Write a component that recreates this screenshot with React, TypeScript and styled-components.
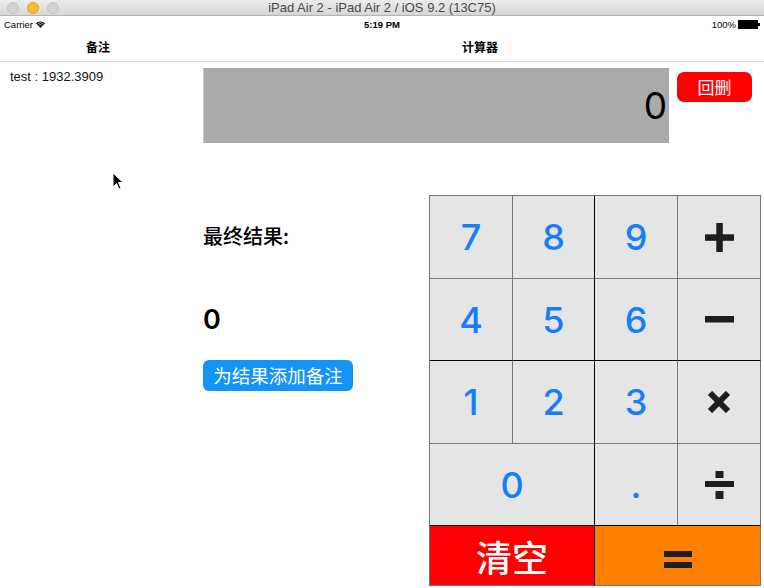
import React from "react";
import styled, { createGlobalStyle } from "styled-components";

const GlobalStyle = createGlobalStyle`
  html, body { margin: 0; padding: 0; background: #fff; }
  body { font-family: "Liberation Sans", "Noto Sans CJK SC", sans-serif; }
  * { box-sizing: border-box; }
`;

const CJK = `"Noto Sans CJK SC", "Liberation Sans", sans-serif`;
const DIGITS = `Inter, "Liberation Sans", sans-serif`;

const Page = styled.div`
  position: relative;
  width: 764px;
  height: 588px;
  overflow: hidden;
  display: flex;
  flex-direction: column;
  background: #fff;
`;

const TitleBar = styled.div`
  height: 16px;
  flex: none;
  display: grid;
  grid-template-columns: 1fr auto 1fr;
  align-items: center;
  background: linear-gradient(#ececec, #d6d6d6);
  border-bottom: 1px solid #b4b4b4;
`;

const Lights = styled.div`
  display: flex;
  gap: 8px;
  padding-left: 7px;
  align-items: center;
  height: 15px;
`;

const Light = styled.span<{ $active?: boolean }>`
  width: 12px;
  height: 12px;
  border-radius: 50%;
  background: ${(p) => (p.$active ? "#fdbb2f" : "#d2d2d2")};
  border: 1px solid ${(p) => (p.$active ? "#e3a224" : "#c2c2c2")};
`;

const WindowTitle = styled.div`
  font-size: 13px;
  line-height: 15px;
  color: #4a4a4a;
  white-space: nowrap;
`;

const StatusBar = styled.div`
  height: 16px;
  flex: none;
  display: grid;
  grid-template-columns: 1fr auto 1fr;
  align-items: center;
  padding: 0 4px;
  font-size: 9.5px;
  color: #000;
`;

const StatusLeft = styled.div`
  display: flex;
  align-items: center;
  gap: 3px;
`;

const StatusTime = styled.div`
  font-weight: 700;
`;

const StatusRight = styled.div`
  display: flex;
  justify-content: flex-end;
  align-items: center;
  gap: 2px;
`;

const NavBar = styled.div`
  height: 30px;
  flex: none;
  display: grid;
  grid-template-columns: 196px 1fr;
  align-items: center;
  border-bottom: 1px solid #d4d4d4;
  font-family: ${CJK};
  font-size: 12px;
  font-weight: 700;
`;

const NavTitle = styled.div`
  text-align: center;
  line-height: 29px;
`;

const Content = styled.div`
  flex: 1;
  display: flex;
`;

const LeftPane = styled.div`
  width: 196px;
  flex: none;
  padding: 7px 0 0 10px;
  font-size: 13px;
  line-height: 15px;
  color: #111;
`;

const RightPane = styled.div`
  flex: 1;
  display: flex;
  flex-direction: column;
  padding: 6px 0 0 7px;
`;

const TopRow = styled.div`
  display: flex;
  align-items: flex-start;
  gap: 8px;
`;

const Display = styled.div`
  width: 466px;
  height: 75px;
  background: #aaaaaa;
  border-left: 1px solid #c9c9c9;
  display: flex;
  align-items: center;
  justify-content: flex-end;
  padding-right: 2px;
  font-family: ${DIGITS};
  font-size: 37px;
  color: #000;
`;

const DeleteButton = styled.button`
  margin-top: 4px;
  width: 75px;
  height: 30px;
  border: none;
  border-radius: 7px;
  background: #ff0000;
  color: #fff;
  font-family: ${CJK};
  font-size: 17px;
  padding: 0;
  line-height: 30px;
`;

const LowerRow = styled.div`
  display: flex;
  margin-top: 52px;
`;

const ResultColumn = styled.div`
  width: 226px;
  flex: none;
  display: flex;
  flex-direction: column;
  align-items: flex-start;
  padding-top: 27px;
`;

const ResultLabel = styled.div`
  font-family: ${CJK};
  font-size: 20px;
  font-weight: 500;
  line-height: 28px;
  color: #000;
`;

const ResultValue = styled.div`
  margin-top: 55px;
  font-family: ${DIGITS};
  font-size: 27px;
  font-weight: 600;
  line-height: 30px;
  color: #000;
`;

const NoteButton = styled.button`
  margin-top: 25px;
  width: 150px;
  height: 31px;
  border: none;
  border-radius: 6px;
  background: #1493f8;
  color: #fff;
  font-family: ${CJK};
  font-size: 18.5px;
  line-height: 31px;
  padding: 0;
  white-space: nowrap;
`;

const Keypad = styled.div`
  display: grid;
  grid-template-columns: 83px 82px 83px 83px;
  grid-template-rows: 83px 82px 83px 82px 60px;
  border-top: 1px solid #777;
  border-left: 1px solid #777;
  box-sizing: content-box;
  width: 331px;
`;

type Variant = "digit" | "op" | "clear" | "equals";

const bgFor = (v: Variant) =>
  v === "clear" ? "#ff0000" : v === "equals" ? "#ff8000" : "#e5e5e5";

const Key = styled.button<{
  $variant: Variant;
  $span?: number;
  $darkRight?: boolean;
  $darkBottom?: boolean;
}>`
  grid-column: span ${(p) => p.$span ?? 1};
  display: flex;
  align-items: center;
  justify-content: center;
  padding: 0;
  border: none;
  border-right: 1px solid ${(p) => (p.$darkRight ? "#000" : "#777")};
  border-bottom: 1px solid ${(p) => (p.$darkBottom ? "#000" : "#777")};
  background: ${(p) => bgFor(p.$variant)};
  color: ${(p) => (p.$variant === "clear" ? "#fff" : p.$variant === "digit" ? "#157efb" : "#1c1c1c")};
  font-family: ${(p) => (p.$variant === "clear" ? CJK : DIGITS)};
  font-weight: 500;
  font-size: 36px;
  line-height: 1;
`;

const Cursor = styled.svg`
  position: absolute;
  left: 112px;
  top: 172px;
`;

const OP_FILL = "#1e1e1e";

const PlusIcon = () => (
  <svg width="29" height="29" viewBox="0 0 29 29" aria-label="+">
    <rect x="11.3" y="0" width="6.5" height="29" fill={OP_FILL} />
    <rect x="0" y="11.3" width="29" height="6.5" fill={OP_FILL} />
  </svg>
);

const MinusIcon = () => (
  <svg width="29" height="7" viewBox="0 0 29 7" aria-label="−">
    <rect x="0" y="0" width="29" height="6.5" fill={OP_FILL} />
  </svg>
);

const TimesIcon = () => (
  <svg width="24" height="22" viewBox="0 0 24 22" aria-label="×">
    <path d="M3 2 L21 20 M21 2 L3 20" stroke={OP_FILL} strokeWidth="6" />
  </svg>
);

const DivideIcon = () => (
  <svg width="29" height="28" viewBox="0 0 29 28" aria-label="÷">
    <rect x="10.5" y="0" width="8" height="7" fill={OP_FILL} />
    <rect x="0" y="10" width="29" height="6" fill={OP_FILL} />
    <rect x="10.5" y="20" width="8" height="8" fill={OP_FILL} />
  </svg>
);

const EqualsIcon = () => (
  <svg width="28" height="17" viewBox="0 0 28 17" aria-label="=" style={{ marginTop: 8 }}>
    <rect x="0" y="0" width="28" height="6" fill={OP_FILL} />
    <rect x="0" y="11" width="28" height="6" fill={OP_FILL} />
  </svg>
);

const WifiIcon = () => (
  <svg width="9" height="7" viewBox="0 0 9 7">
    <path d="M4.5 7 L0 2.2 A6.5 6.5 0 0 1 9 2.2 Z" fill="#000" />
    <path d="M1.6 2.9 A4.3 4.3 0 0 1 7.4 2.9" stroke="#fff" strokeWidth="0.7" fill="none" />
    <path d="M2.8 4.3 A2.5 2.5 0 0 1 6.2 4.3" stroke="#fff" strokeWidth="0.7" fill="none" />
  </svg>
);

const BatteryIcon = () => (
  <svg width="22" height="9" viewBox="0 0 22 9">
    <rect x="0.5" y="0.5" width="19" height="8" fill="#000" stroke="#000" />
    <rect x="20" y="3" width="2" height="3" fill="#000" />
  </svg>
);

type KeyDef = {
  label: React.ReactNode;
  variant: Variant;
  span?: number;
  darkRight?: boolean;
  darkBottom?: boolean;
};

const keys: KeyDef[] = [
  { label: "7", variant: "digit" },
  { label: "8", variant: "digit", darkRight: true },
  { label: "9", variant: "digit" },
  { label: <PlusIcon />, variant: "op" },
  { label: "4", variant: "digit", darkBottom: true },
  { label: "5", variant: "digit", darkRight: true, darkBottom: true },
  { label: "6", variant: "digit", darkBottom: true },
  { label: <MinusIcon />, variant: "op", darkBottom: true },
  { label: "1", variant: "digit" },
  { label: "2", variant: "digit", darkRight: true },
  { label: "3", variant: "digit" },
  { label: <TimesIcon />, variant: "op" },
  { label: "0", variant: "digit", span: 2, darkRight: true, darkBottom: true },
  { label: ".", variant: "digit", darkBottom: true },
  { label: <DivideIcon />, variant: "op", darkBottom: true },
  { label: "清空", variant: "clear", span: 2, darkRight: true },
  { label: <EqualsIcon />, variant: "equals", span: 2 },
];

export default function App() {
  return (
    <>
      <GlobalStyle />
      <Page>
        <TitleBar>
          <Lights>
            <Light />
            <Light $active />
            <Light />
          </Lights>
          <WindowTitle>iPad Air 2 - iPad Air 2 / iOS 9.2 (13C75)</WindowTitle>
          <div />
        </TitleBar>
        <StatusBar>
          <StatusLeft>
            Carrier <WifiIcon />
          </StatusLeft>
          <StatusTime>5:19 PM</StatusTime>
          <StatusRight>
            100% <BatteryIcon />
          </StatusRight>
        </StatusBar>
        <NavBar>
          <NavTitle>备注</NavTitle>
          <NavTitle>计算器</NavTitle>
        </NavBar>
        <Content>
          <LeftPane>test : 1932.3909</LeftPane>
          <RightPane>
            <TopRow>
              <Display>0</Display>
              <DeleteButton>回删</DeleteButton>
            </TopRow>
            <LowerRow>
              <ResultColumn>
                <ResultLabel>最终结果:</ResultLabel>
                <ResultValue>0</ResultValue>
                <NoteButton>为结果添加备注</NoteButton>
              </ResultColumn>
              <Keypad>
                {keys.map((k, i) => (
                  <Key
                    key={i}
                    $variant={k.variant}
                    $span={k.span}
                    $darkRight={k.darkRight}
                    $darkBottom={k.darkBottom}
                  >
                    {k.label}
                  </Key>
                ))}
              </Keypad>
            </LowerRow>
          </RightPane>
        </Content>
        <Cursor width="12" height="18" viewBox="0 0 12 18">
          <path d="M1 1 L1 15 L4.5 11.5 L7 17 L9 16 L6.5 10.5 L11 10.5 Z" fill="#000" stroke="#fff" strokeWidth="1" />
        </Cursor>
      </Page>
    </>
  );
}
